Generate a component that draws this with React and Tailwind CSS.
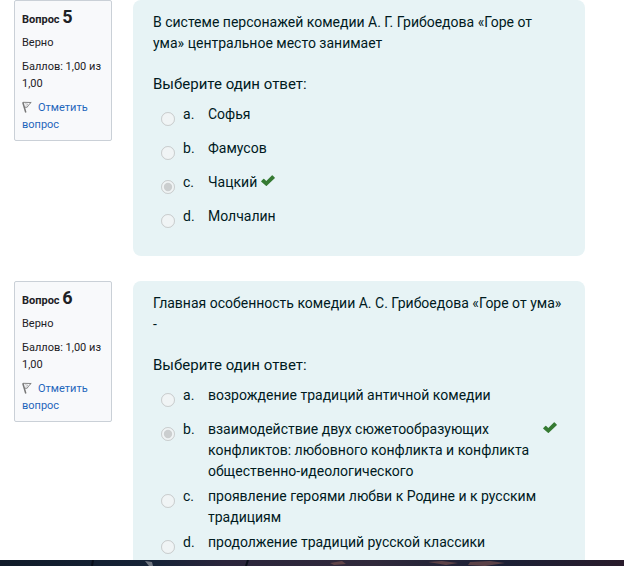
import React from 'react';

const questions = [
  {
    number: 5,
    text: 'В системе персонажей комедии А. Г. Грибоедова «Горе от ума» центральное место занимает',
    correct: 'c',
    answers: [
      { letter: 'a', text: 'Софья' },
      { letter: 'b', text: 'Фамусов' },
      { letter: 'c', text: 'Чацкий' },
      { letter: 'd', text: 'Молчалин' },
    ],
  },
  {
    number: 6,
    text: 'Главная особенность комедии А. С. Грибоедова «Горе от ума» -',
    correct: 'b',
    answers: [
      { letter: 'a', text: 'возрождение традиций античной комедии' },
      {
        letter: 'b',
        text: 'взаимодействие двух сюжетообразующих конфликтов: любовного конфликта и конфликта общественно-идеологического',
      },
      { letter: 'c', text: 'проявление героями любви к Родине и к русским традициям' },
      { letter: 'd', text: 'продолжение традиций русской классики' },
    ],
  },
];

const FlagIcon = () => (
  <svg viewBox="0 0 10 12" className="mr-[6px] inline-block h-3 w-[10px] align-[-2px]" fill="none" stroke="#777" aria-hidden="true">
    <path d="M0.8 1.2 3.8 11.5" strokeWidth="1.5" />
    <path d="M1 1.3 9.2 1.5 6.8 3.7 5.2 6.2 2.4 6.2" strokeWidth="0.9" />
    <path d="M2.8 2.6 6 3.2 3.5 4.8" strokeWidth="0.6" stroke="#aaa" />
  </svg>
);

const CheckIcon = () => (
  <svg viewBox="0 0 14 11" className="mt-[3px] h-[11px] w-[14px] shrink-0" fill="#357a32" role="img" aria-label="Верно">
    <path d="M0.3 5.9 2.3 3.9Q2.8 3.5 3.2 3.9L5.3 6 10.8 0.5Q11.3 0.1 11.7 0.5L13.7 2.4Q14.1 2.9 13.7 3.3L5.8 10.8Q5.3 11.2 4.9 10.8L0.3 6.8Q-0.1 6.3 0.3 5.9Z" />
  </svg>
);

const QuestionInfo = ({ number }) => (
  <aside className="flex w-[98px] shrink-0 flex-col gap-[7px] rounded-xs border border-[#cad0d7] bg-[#f8f9fb] px-[7px] py-[7px] text-[11px] leading-[17px] text-[#1d2125]">
    <h3 className="font-bold leading-[14px]">
      Вопрос <span className="text-[18px] leading-[18px]">{number}</span>
    </h3>
    <div>Верно</div>
    <div>Баллов: 1,00 из 1,00</div>
    <a href="#flag" className="text-[#1f66bb]">
      <FlagIcon />
      Отметить вопрос
    </a>
  </aside>
);

const Answer = ({ question, answer }) => {
  const id = `q${question}-${answer.letter}`;
  return (
    <div className="flex min-h-[34px] items-start py-[2px] pl-2">
      <input
        type="radio"
        id={id}
        name={`q${question}`}
        defaultChecked={answer.checked}
        disabled
        className="mt-2 mr-2 size-[14px] shrink-0"
      />
      <label htmlFor={id} className="flex min-w-0">
        <span className="w-[25px] shrink-0">{answer.letter}.</span>
        <span className="mr-1">{answer.text}</span>
      </label>
      {answer.checked && <CheckIcon />}
    </div>
  );
};

const Question = ({ question }) => (
  <section className="flex items-start gap-[21px]">
    <QuestionInfo number={question.number} />
    <div className="min-w-0 flex-1 rounded-lg bg-[#e7f3f5] px-5 pt-3 pb-[18px] text-sm leading-[21px] text-[#001a1e]">
      <p>{question.text}</p>
      <fieldset className="mt-5">
        <legend className="mb-[7px] text-[15px]">Выберите один ответ:</legend>
        <div className="pr-2">
          {question.answers.map((answer) => (
            <Answer
              key={answer.letter}
              question={question.number}
              answer={{ ...answer, checked: answer.letter === question.correct }}
            />
          ))}
        </div>
      </fieldset>
    </div>
  </section>
);

export default function App() {
  return (
    <div className="flex h-screen flex-col bg-white font-['Roboto','Liberation_Sans',sans-serif]">
      <main className="flex min-h-0 flex-1 flex-col gap-[25px] overflow-hidden pr-[39px] pl-[14px]">
        {questions.map((question) => (
          <Question key={question.number} question={question} />
        ))}
      </main>
      {/* desktop wallpaper under the page */}
      <svg viewBox="0 0 624 6" preserveAspectRatio="none" className="h-[6px] w-full shrink-0" aria-hidden="true">
        <defs>
          <linearGradient id="wallpaper">
            <stop offset="0" stopColor="#101b29" />
            <stop offset="0.25" stopColor="#162337" />
            <stop offset="0.36" stopColor="#2b253c" />
            <stop offset="0.6" stopColor="#30293b" />
            <stop offset="0.8" stopColor="#1b2036" />
            <stop offset="1" stopColor="#291b2b" />
          </linearGradient>
        </defs>
        <rect width="624" height="6" fill="url(#wallpaper)" />
        <path d="M145 1 152 2 153 6 149 6Z" fill="#707681" />
        <path d="M93 0 92 6M248 0 246 6" stroke="#090e19" strokeWidth="2" />
        <path d="M330 3 342 1 346 4 334 5ZM428 2 442 1 458 3 446 5ZM470 2 490 1 505 3 485 6 468 5Z" fill="#76504e" opacity="0.7" />
      </svg>
    </div>
  );
}
